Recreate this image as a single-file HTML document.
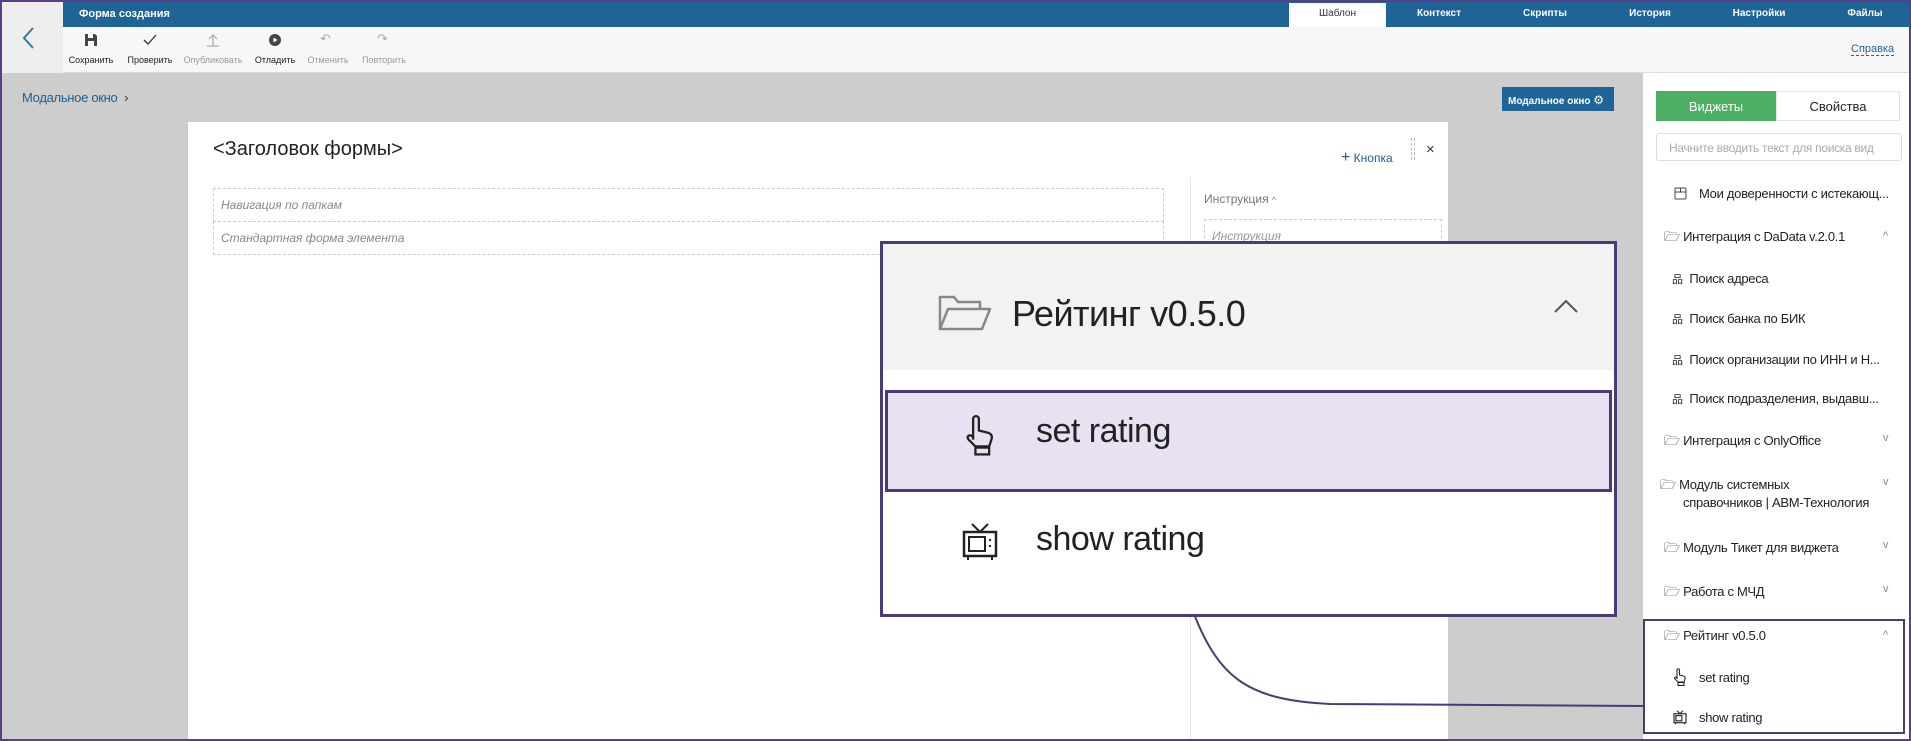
<!DOCTYPE html>
<html><head><meta charset="utf-8"><style>
*{box-sizing:border-box;margin:0;padding:0}
body{width:1911px;height:741px;overflow:hidden;position:relative;background:#cdcdcd;font-family:"Liberation Sans","Noto Sans CJK SC",sans-serif;color:#222}
.a{position:absolute;white-space:nowrap}
#frame{position:absolute;left:0;top:0;width:1911px;height:741px;border:2px solid #5b3f86;pointer-events:none;z-index:50}
.tb{font-size:9px;color:#222;text-align:center;width:70px}
.tb.d{color:#999}
.it{font-size:13px;color:#222;letter-spacing:-0.3px}
.chev{font-size:11px;color:#888}
</style></head><body>
<div class="a" style="left:0;top:0;width:1911px;height:27px;background:#1f6496"></div>
<div class="a" style="left:0;top:0;width:63px;height:73px;background:#eeeeee"></div>
<div class="a" style="left:63px;top:27px;width:1848px;height:46px;background:#f7f7f7;border-bottom:1px solid #ddd"></div>
<div class="a" style="left:79px;top:8px;font-size:11px;color:#fff;font-weight:bold">Форма создания</div>
<svg class="a" style="left:20px;top:26px" width="16" height="24"><path d="M13 2 L4 12 L13 22" fill="none" stroke="#2a7ab0" stroke-width="2"/></svg>
<div class="a" style="left:1289px;top:3px;width:97px;height:24px;background:#fff"></div>
<div class="a" style="left:1289px;top:8px;width:97px;text-align:center;font-size:10px;color:#333">Шаблон</div>
<div class="a" style="left:1399px;top:8px;width:80px;text-align:center;font-size:10px;color:#fff;font-weight:bold">Контекст</div>
<div class="a" style="left:1505px;top:8px;width:80px;text-align:center;font-size:10px;color:#fff;font-weight:bold">Скрипты</div>
<div class="a" style="left:1610px;top:8px;width:80px;text-align:center;font-size:10px;color:#fff;font-weight:bold">История</div>
<div class="a" style="left:1719px;top:8px;width:80px;text-align:center;font-size:10px;color:#fff;font-weight:bold">Настройки</div>
<div class="a" style="left:1825px;top:8px;width:80px;text-align:center;font-size:10px;color:#fff;font-weight:bold">Файлы</div>
<!-- toolbar -->
<svg class="a" style="left:84px;top:33px" width="14" height="14"><path d="M1 1h10l2 2v10H1z" fill="#444"/><rect x="4" y="1" width="5" height="4" fill="#f7f7f7"/><rect x="4" y="8" width="6" height="5" fill="#f7f7f7"/></svg>
<svg class="a" style="left:143px;top:34px" width="14" height="12"><path d="M1 6l4 4 8-9" fill="none" stroke="#333" stroke-width="1.3"/></svg>
<svg class="a" style="left:206px;top:33px" width="14" height="14"><path d="M7 12V2M3 6l4-4 4 4M1 13h12" fill="none" stroke="#aaa" stroke-width="1.2"/></svg>
<svg class="a" style="left:268px;top:33px" width="14" height="14"><circle cx="7" cy="7" r="6" fill="#444"/><path d="M5.5 4.5v5l4-2.5z" fill="#fff"/></svg>
<div class="a" style="left:320px;top:31px;font-size:13px;color:#aaa">↶</div>
<div class="a" style="left:377px;top:31px;font-size:13px;color:#aaa">↷</div>
<div class="a tb" style="left:56px;top:55px">Сохранить</div>
<div class="a tb" style="left:115px;top:55px">Проверить</div>
<div class="a tb d" style="left:178px;top:55px">Опубликовать</div>
<div class="a tb" style="left:240px;top:55px">Отладить</div>
<div class="a tb d" style="left:293px;top:55px">Отменить</div>
<div class="a tb d" style="left:349px;top:55px">Повторить</div>
<div class="a" style="left:1851px;top:43px;font-size:11px;color:#1f6496;border-bottom:1px dashed #1f6496">Справка</div>
<!-- main -->
<div class="a" style="left:22px;top:90px;font-size:13px;color:#1f5f8e;letter-spacing:-0.3px">Модальное окно &nbsp;<span style="color:#333">›</span></div>
<div class="a" style="left:1502px;top:87px;width:112px;height:24px;background:#1f6496;color:#fff;font-size:10px;font-weight:bold;padding:6px 0 0 6px">Модальное окно <span style="font-size:12px;font-weight:normal">⚙</span></div>
<div class="a" style="left:188px;top:122px;width:1260px;height:619px;background:#fff"></div>
<div class="a" style="left:213px;top:138px;font-size:20px;color:#222">&lt;Заголовок формы&gt;</div>
<div class="a" style="left:1341px;top:149px;font-size:12px;color:#1f5f8e"><span style="font-size:16px">+</span> Кнопка</div>
<div class="a" style="left:1411px;top:138px;width:4px;height:22px;border-left:1px dashed #bbb;border-right:1px dashed #bbb"></div>
<div class="a" style="left:1426px;top:141px;font-size:15px;color:#333">×</div>
<div class="a" style="left:213px;top:188px;width:951px;height:34px;border:1px dashed #ccc;font-size:12px;color:#888;font-style:italic;padding:9px 7px">Навигация по папкам</div>
<div class="a" style="left:213px;top:221px;width:951px;height:34px;border:1px dashed #ccc;font-size:12px;color:#888;font-style:italic;padding:9px 7px">Стандартная форма элемента</div>
<div class="a" style="left:1190px;top:177px;width:1px;height:564px;background:#e5e5e5"></div>
<div class="a" style="left:1204px;top:192px;font-size:12px;color:#777">Инструкция <span style="font-size:9px">^</span></div>
<div class="a" style="left:1204px;top:219px;width:238px;height:30px;border:1px dashed #ccc;font-size:12px;color:#999;font-style:italic;padding:9px 7px">Инструкция</div>
<!-- curve -->
<svg class="a" style="left:1180px;top:600px" width="470" height="120"><path d="M14 14 C40 80 70 100 150 104 L463 106" fill="none" stroke="#4b3a78" stroke-width="2"/></svg>
<!-- right panel -->
<div class="a" style="left:1643px;top:73px;width:268px;height:668px;background:#fff"></div>
<div class="a" style="left:1656px;top:91px;width:120px;height:30px;background:#4caf63;color:#fff;font-size:13px;text-align:center;padding-top:8px">Виджеты</div>
<div class="a" style="left:1776px;top:91px;width:124px;height:30px;border:1px solid #e3e3e3;font-size:13px;text-align:center;padding-top:7px">Свойства</div>
<div class="a" style="left:1656px;top:133px;width:246px;height:28px;border:1px solid #ddd;border-radius:3px;font-size:12px;color:#aaa;padding:7px 12px;overflow:hidden;letter-spacing:-0.3px">Начните вводить текст для поиска вид</div>
<svg class="a" style="left:1674px;top:187px" width="13" height="13"><rect x="1" y="1" width="11" height="11" rx="1" fill="none" stroke="#444"/><path d="M1 5h11M6.5 1v4" stroke="#444"/></svg>
<div class="a it" style="left:1699px;top:186px">Мои доверенности с истекающ...</div>
<div class="a it" style="left:1664px;top:228px">🗁 Интеграция с DaData v.2.0.1</div><div class="a chev" style="left:1883px;top:230px">^</div>
<div class="a it" style="left:1672px;top:271px"><span style="font-size:11px">品</span> &nbsp;Поиск адреса</div>
<div class="a it" style="left:1672px;top:311px"><span style="font-size:11px">品</span> &nbsp;Поиск банка по БИК</div>
<div class="a it" style="left:1672px;top:352px"><span style="font-size:11px">品</span> &nbsp;Поиск организации по ИНН и Н...</div>
<div class="a it" style="left:1672px;top:391px"><span style="font-size:11px">品</span> &nbsp;Поиск подразделения, выдавш...</div>
<div class="a it" style="left:1664px;top:432px">🗁 Интеграция с OnlyOffice</div><div class="a chev" style="left:1883px;top:432px">v</div>
<div class="a it" style="left:1660px;top:476px">🗁 Модуль системных</div><div class="a chev" style="left:1883px;top:476px">v</div>
<div class="a it" style="left:1683px;top:495px">справочников | ABM-Технология</div>
<div class="a it" style="left:1664px;top:539px">🗁 Модуль Тикет для виджета</div><div class="a chev" style="left:1883px;top:539px">v</div>
<div class="a it" style="left:1664px;top:583px">🗁 Работа с МЧД</div><div class="a chev" style="left:1883px;top:583px">v</div>
<div class="a" style="left:1643px;top:619px;width:262px;height:115px;border:2px solid #4b3a78"></div>
<div class="a it" style="left:1664px;top:627px">🗁 Рейтинг v0.5.0</div><div class="a chev" style="left:1883px;top:629px">^</div>
<svg class="a" style="left:1673px;top:668px" width="14" height="18" viewBox="0 0 28 36"><path d="M8 22V4a2.5 2.5 0 0 1 5 0v10l8 2c3 1 4 3 3 6l-2 6H10l-6-6c-2-2 0-5 3-3l1 1" fill="none" stroke="#222" stroke-width="2.2"/><rect x="10" y="29" width="12" height="6" fill="none" stroke="#222" stroke-width="2.2"/></svg>
<div class="a it" style="left:1699px;top:670px">set rating</div>
<svg class="a" style="left:1673px;top:710px" width="14" height="15" viewBox="0 0 36 40"><path d="M10 2l8 8 8-8" fill="none" stroke="#222" stroke-width="3"/><rect x="2" y="10" width="32" height="24" fill="none" stroke="#222" stroke-width="3"/><rect x="7" y="15" width="16" height="14" fill="none" stroke="#222" stroke-width="3"/><path d="M6 34v4M30 34v4" stroke="#222" stroke-width="3"/></svg>
<div class="a it" style="left:1699px;top:710px">show rating</div>
<!-- callout -->
<div class="a" style="left:880px;top:241px;width:737px;height:376px;background:#fff;border:3px solid #4b3a78"></div>
<div class="a" style="left:883px;top:244px;width:731px;height:126px;background:#f2f2f3"></div>
<svg class="a" style="left:938px;top:294px" width="54" height="38"><path d="M2 35V3h14l4 5h22v7M2 35l8-20h42l-8 20z" fill="none" stroke="#888" stroke-width="2.5" stroke-linejoin="round"/></svg>
<div class="a" style="left:1012px;top:293px;font-size:36px;color:#222;letter-spacing:-0.5px">Рейтинг v0.5.0</div>
<svg class="a" style="left:1553px;top:298px" width="26" height="16"><path d="M2 14L13 3l11 11" fill="none" stroke="#555" stroke-width="2"/></svg>
<div class="a" style="left:885px;top:390px;width:727px;height:102px;background:#e8e1f1;border:3px solid #4b3a78"></div>
<svg class="a" style="left:964px;top:414px" width="32" height="42" viewBox="0 0 28 36"><path d="M8 22V4a2.5 2.5 0 0 1 5 0v10l8 2c3 1 4 3 3 6l-2 6H10l-6-6c-2-2 0-5 3-3l1 1" fill="none" stroke="#222" stroke-width="2"/><rect x="10" y="29" width="12" height="6" fill="none" stroke="#222" stroke-width="2"/></svg>
<div class="a" style="left:1036px;top:412px;font-size:34px;color:#222;letter-spacing:-0.5px">set rating</div>
<svg class="a" style="left:962px;top:522px" width="36" height="40"><path d="M10 2l8 8 8-8" fill="none" stroke="#222" stroke-width="2"/><rect x="2" y="10" width="32" height="24" fill="none" stroke="#222" stroke-width="2.5"/><rect x="7" y="15" width="16" height="14" fill="none" stroke="#222" stroke-width="2"/><path d="M28 17v2M28 23v2M6 34v4M30 34v4" stroke="#222" stroke-width="2"/></svg>
<div class="a" style="left:1036px;top:520px;font-size:34px;color:#222;letter-spacing:-0.5px">show rating</div>
<div id="frame"></div>
</body></html>
